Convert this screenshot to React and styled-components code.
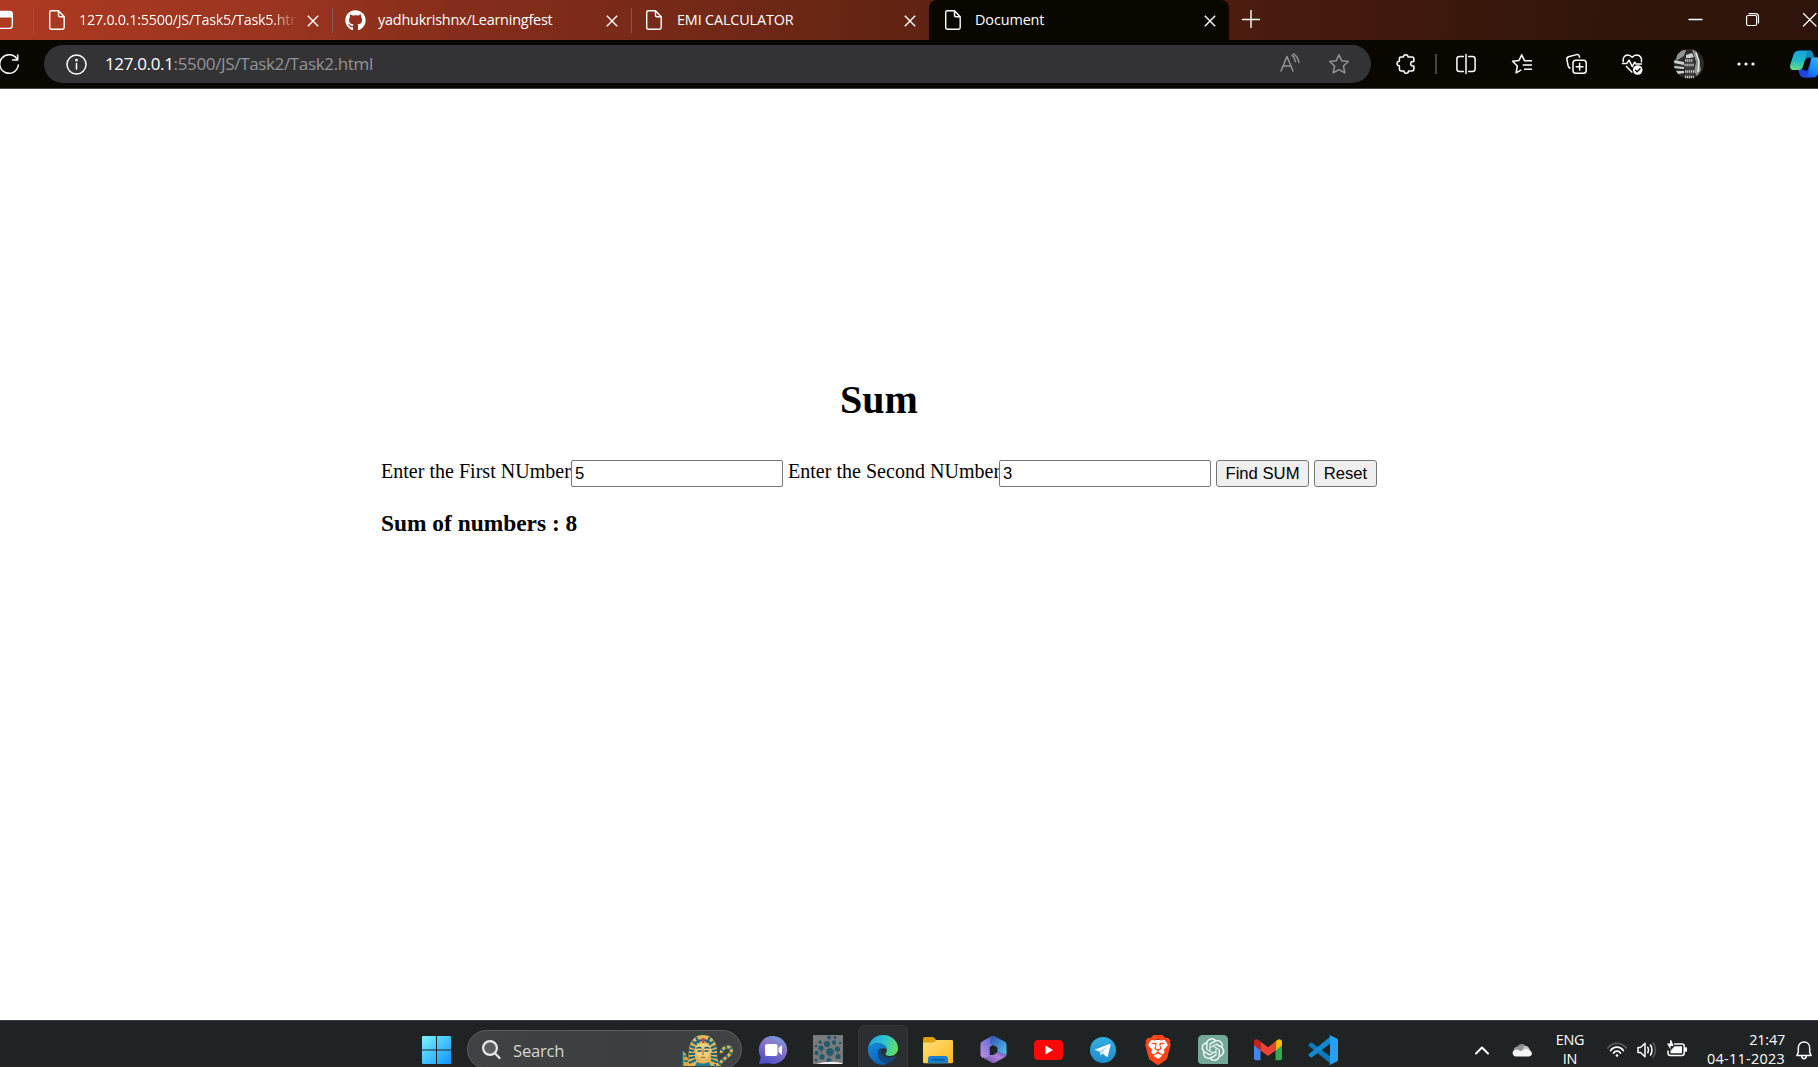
import React, { useState } from "react";
import styled, { createGlobalStyle, css } from "styled-components";
import { FaGithub } from "react-icons/fa";
import { SiBrave, SiOpenai } from "react-icons/si";

const GlobalStyle = createGlobalStyle`
  * { box-sizing: border-box; }
  html, body { margin: 0; padding: 0; background: #fff; }
  svg { display: block; flex: none; overflow: visible; }
`;

const ui = css`font-family: "Open Sans", "Noto Sans", sans-serif;`;

const Screen = styled.div`
  width: 1818px;
  height: 1067px;
  display: flex;
  flex-direction: column;
  overflow: hidden;
`;

/* ---------- browser tabs ---------- */
const TabStrip = styled.div`
  height: 40px;
  flex: none;
  display: flex;
  overflow: hidden;
  background: linear-gradient(92deg, #ae3a21 0, #983420 300px, #852d1a 460px, #742917 700px, #602313 925px, #4c1c0f 1235px, #41190c 1380px, #31150b 1600px, #2e140a 1818px);
`;
const TabAction = styled.div`
  width: 33px;
  flex: none;
  display: flex;
  align-items: center;
  justify-content: flex-start;
`;
const Tab = styled.div`
  width: ${(p) => p.$width}px;
  flex: none;
  height: 40px;
  padding: ${(p) => (p.$active ? "0 13px 6px 13px" : "0 13px 6px 12px")};
  display: flex;
  align-items: center;
  color: #fff;
  background: ${(p) => (p.$active ? "#0a0700" : "transparent")};
  border-radius: 8px 8px 0 0;
  &::before {
    content: "";
    display: ${(p) => (p.$active ? "none" : "block")};
    width: 1px;
    height: 25px;
    margin: 7px 0 0 -12px;
    background: #835c50;
  }
`;
const TabIcon = styled.div`
  width: 22px;
  height: 22px;
  margin: 6px 0 0 ${(p) => p.$left}px;
  display: flex;
  align-items: center;
  justify-content: center;
`;
const TabTitle = styled.div`
  ${ui}
  flex: 1;
  min-width: 0;
  margin: 6px 11px 0 ${(p) => p.$gap}px;
  height: 24px;
  line-height: 23px;
  font-size: 14.4px;
  letter-spacing: ${(p) => p.$track}px;
  white-space: nowrap;
  overflow: hidden;
  ${(p) => p.$fade && css`mask-image: linear-gradient(90deg, #000 88%, transparent 101%);`}
`;
const CloseButton = styled.div`
  width: 12px;
  margin-top: 7px;
`;
const NewTab = styled.div`
  padding: 10px 0 0 13px;
  flex: 1;
`;
const WindowControls = styled.div`
  display: flex;
  gap: 44px;
  padding-top: 13px;
  width: 129px;
  flex: none;
`;

/* ---------- toolbar ---------- */
const Toolbar = styled.div`
  height: 49px;
  flex: none;
  background: #0a0700;
  border-bottom: 1px solid #4b4641;
  display: flex;
  align-items: center;
  overflow: hidden;
`;
const Reload = styled.div`
  width: 44px;
  flex: none;
`;
const AddressBar = styled.div`
  width: 1327px;
  flex: none;
  height: 38px;
  border-radius: 19px;
  background: #333335;
  display: flex;
  align-items: center;
  padding: 0 22px;
`;
const Url = styled.div`
  ${ui}
  flex: 1;
  margin-left: 18px;
  font-size: 17px;
  line-height: 24px;
  letter-spacing: -0.35px;
  color: #949495;
  span { color: #fff; }
`;
const AddressIcons = styled.div`
  display: flex;
  gap: 29px;
`;
const ToolbarIcons = styled.div`
  display: flex;
  flex: none;
  align-items: center;
  margin-left: 6px;
`;
const ToolSlot = styled.div`
  width: ${(p) => p.$width || 55}px;
  flex: none;
  display: flex;
  justify-content: center;
  align-items: center;
`;
const ToolDivider = styled.div`
  width: 2px;
  height: 20px;
  background: #48453f;
`;

/* ---------- web page ---------- */
const Page = styled.main`
  flex: 1;
  background: #fff;
  padding: 288px 0 0 381px;
  font-family: "Liberation Serif", "Times New Roman", serif;
  color: #000;
`;
const Content = styled.div`
  width: 996px;
`;
const Title = styled.h1`
  margin: 0;
  text-align: center;
  font-size: 40px;
  line-height: 46px;
`;
const Form = styled.div`
  margin-top: 37px;
  height: 27px;
  display: flex;
  align-items: center;
  font-size: 20px;
`;
const Label = styled.label`
  width: ${(p) => p.$width}px;
  flex: none;
  line-height: 23px;
  margin-top: -4px;
  letter-spacing: 0.02px;
  white-space: nowrap;
`;
const NumberInput = styled.input`
  width: 212px;
  flex: none;
  height: 27px;
  margin: 0 5px 0 0;
  padding: 1px 3px 1px 3px;
  border: 1px solid #767676;
  border-radius: 2px;
  outline: 0;
  background: #fff;
  color: #000;
  font: 16.67px "Liberation Sans", Arial, sans-serif;
`;
const Button = styled.button`
  width: ${(p) => p.$width}px;
  height: 27px;
  margin: 0 5px 0 0;
  padding: 0;
  white-space: nowrap;
  flex: none;
  border: 1px solid #767676;
  border-radius: 3px;
  background: #efefef;
  color: #000;
  font: 16.67px "Liberation Sans", Arial, sans-serif;
`;
const Result = styled.h3`
  margin: 23px 0 0;
  font-size: 23.4px;
  line-height: 27px;
`;

/* ---------- taskbar ---------- */
const Taskbar = styled.footer`
  height: 47px;
  flex: none;
  background: #1f2324;
  border-top: 1px solid #3a3e3f;
  display: flex;
  align-items: flex-start;
  overflow: hidden;
`;
const StartButton = styled.div`
  padding: 15px 16px 0 422px;
`;
const SearchBox = styled.div`
  ${ui}
  width: 275px;
  height: 39px;
  margin-top: 9px;
  border: 1px solid #5d6061;
  border-radius: 20px;
  background: linear-gradient(90deg, #404344, #3b3f40 60%, #404344);
  display: flex;
  align-items: center;
  padding: 0 8px 0 14px;
  color: #d4d5d5;
  font-size: 16.6px;
  letter-spacing: -0.2px;
`;
const SearchText = styled.span`
  flex: 1;
  margin: 2px 0 0 12px;
`;
const Apps = styled.div`
  display: flex;
  gap: 5px;
  padding: 4px 0 0 6px;
`;
const AppButton = styled.div`
  width: 50px;
  height: 44px;
  padding-top: 9px;
  display: flex;
  justify-content: center;
  border: 1px solid ${(p) => (p.$active ? "#36393b" : "transparent")};
  border-bottom: 0;
  border-radius: 6px 6px 0 0;
  background: ${(p) => (p.$active ? "#2c2f31" : "transparent")};
`;
const Tray = styled.div`
  ${ui}
  height: 46px;
  display: flex;
  flex: 1;
  padding-left: 127px;
  color: #fff;
  font-size: 14.4px;
  line-height: 19px;
`;
const TrayItem = styled.div`
  width: ${(p) => p.$width}px;
  flex: none;
  padding-top: ${(p) => p.$top}px;
  padding-left: ${(p) => p.$left || 0}px;
  display: flex;
  justify-content: flex-start;
`;
const TrayText = styled.div`
  width: ${(p) => p.$width}px;
  height: 44px;
  overflow: hidden;
  flex: none;
  padding-top: 9px;
  white-space: nowrap;
  text-align: ${(p) => p.$align};
  letter-spacing: ${(p) => p.$track}px;
`;
const TrayDate = styled.div`
  letter-spacing: 0.3px;
`;

const line = { fill: "none", stroke: "#fff", strokeWidth: 1.4, strokeLinecap: "round", strokeLinejoin: "round" };

const FileIcon = () => (
  <svg width="16" height="20" viewBox="0 0 16 20" {...line}>
    <path d="M2.2.8h7.3l5.7 5.9v10.8c0 1-.7 1.7-1.7 1.7H2.4c-1 0-1.7-.7-1.7-1.7V2.4C.7 1.500 1.300.8 2.200.8zM9.500.8v4.400c0 .9.600 1.500 1.500 1.500h4.200" />
  </svg>
);
const XIcon = ({ size = 12 }) => (
  <svg width={size} height={size} viewBox="0 0 12 12" {...line} strokeLinecap="butt">
    <path d="M.8.8l10.400 10.400M11.200.8L.8 11.200" />
  </svg>
);

const CollectionsTabIcon = () => (
  <svg width="14" height="20" viewBox="0 0 14 20" {...line}>
    <path d="M-6 1.800H9.500c1.700 0 2.800 1.100 2.800 2.800v11c0 1.700-1.100 2.800-2.800 2.800H-6" />
    <path d="M-6 1.500H9.500c1.700 0 2.800 1.100 2.800 2.800v2.500H-6z" fill="#fff" />
  </svg>
);
const ReloadIcon = () => (
  <svg width="20" height="20" viewBox="0 0 20 20" {...line} strokeWidth="1.500">
    <path d="M17.200 5.500A9.300 9.300 0 1 0 18.300 11M17.700 1v5h-5.200" />
  </svg>
);
const InfoIcon = () => (
  <svg width="21" height="21" viewBox="0 0 21 21" {...line} strokeWidth="1.500">
    <circle cx="10.500" cy="10.500" r="9.500" />
    <path d="M10.500 9.500v5.500" />
    <circle cx="10.500" cy="6.200" r=".6" fill="#fff" />
  </svg>
);
const ReadAloudIcon = () => (
  <svg width="20" height="20" viewBox="0 0 20 20" {...line} stroke="#949495" strokeWidth="1.500">
    <path d="M1 17L7 2.500 13 17M3.200 12h7.600M12 1.200c1.800 1.500 3 3.500 3.400 6.300M13.500-.2c3 2 4.900 5 5.400 8.700" />
  </svg>
);
const StarIcon = () => (
  <svg width="20" height="20" viewBox="0 0 20 20" {...line} stroke="#949495" strokeWidth="1.500">
    <path d="M10 .8l2.700 6 6.600.7-4.900 4.500 1.400 6.800L10 15.600l-5.800 3.200L5.600 12 .7 7.500l6.600-.7z" />
  </svg>
);
const PuzzleIcon = () => (
  <svg width="20" height="20" viewBox="0 0 20 20" {...line} strokeWidth="1.500">
    <path d="M4.800 3h2.700c0-3 4.500-3 4.500 0h4c1.200 0 1.900.7 1.900 1.900V7.500h-1c-3 0-3 4.500 0 4.500h1v3c0 1.200-.7 1.900-1.900 1.900h-3.500c0 3-4.500 3-4.500 0H5.300c-1.200 0-1.900-.7-1.900-1.900v-3.200c-3.200 0-3.200-4.500 0-4.500V4.500C3.400 3.600 3.900 3 4.800 3z" />
  </svg>
);
const SplitIcon = () => (
  <svg width="20" height="20" viewBox="0 0 20 20" {...line} strokeWidth="1.500">
    <path d="M10 .5v19M7.300 2.500H3.500C1.900 2.500.9 3.500.9 5v10c0 1.500 1 2.500 2.600 2.500h3.800M12.700 2.500h3.800c1.600 0 2.600 1 2.600 2.500v10c0 1.500-1 2.500-2.600 2.500h-3.800" />
  </svg>
);
const FavoritesIcon = () => (
  <svg width="20" height="20" viewBox="0 0 20 20" {...line} strokeWidth="1.500">
    <path d="M12.600 6.800L9.700.8 7 6.400l-6.400.9L5.300 12l-1.200 6.800 4.700-2.600M13 6.800h6.500M11.200 11h8.300M12.500 15.200h7" />
  </svg>
);
const CollectionsIcon = () => (
  <svg width="21" height="20" viewBox="0 0 21 20" {...line} strokeWidth="1.500">
    <rect x="7" y="6.200" width="13.200" height="13" rx="2.800" />
    <path d="M13.600 9.300v6.800M10.200 12.700H17M4 14.200C3 13.800 2.500 13 2.200 12L.9 5.600C.6 4.200 1.300 3.200 2.600 2.800l8-2.200c1.200-.3 2.200.3 2.600 1.500l.4 1" />
  </svg>
);
const HeartIcon = () => (
  <svg width="21" height="21" viewBox="0 0 21 21" {...line} strokeWidth="1.500">
    <path d="M1.300 7.500C.4 3.800 2.800 1 5.700 1c2 0 3.200.8 4.500 2.300C11.500 1.800 12.700 1 14.700 1c3.300 0 5.600 3 4.700 6.700M.5 9.500h4.300l2.200-3.300 3.300 6.500 2.400-4.500 1.300 1.800h5.500M4.500 12.500l5.300 5.600" />
    <circle cx="15.700" cy="16" r="4.800" fill="#fff" stroke="none" />
    <path d="M13.500 16.200l1.600 1.500 2.900-3" stroke="#111" />
  </svg>
);
const Avatar = () => (
  <svg width="30" height="30" viewBox="0 0 30 30">
    <defs><clipPath id="face"><circle cx="15" cy="15" r="15" /></clipPath></defs>
    <g clipPath="url(#face)">
      <rect width="30" height="30" fill="#292929" />
      <path d="M4 1l8 0-2 6-8 5zM18 0l5 3 4 18-4 6-3-4 2-10z" fill="#929292" />
      <path d="M0 11l10 2v3L0 14zM0 17l10 1v2L0 19zM2 22l8 0v2l-6 1zM12 6l6-2 2 4-8 2z" fill="#cecece" />
      <path d="M11 9h9v18h-9z" fill="#3b3b3b" />
      <path d="M11 11.500h8M10.500 16h10M11 22.500h9M11 28h9" stroke="#c4c4c4" strokeWidth="2.500" strokeDasharray="1.300 .7" />
      <path d="M22 4l3 8-1 11" stroke="#e8e8e8" strokeWidth="1.500" fill="none" />
    </g>
  </svg>
);
const DotsIcon = () => (
  <svg width="18" height="4" viewBox="0 0 18 4" fill="#fff">
    <circle cx="2" cy="2" r="1.600" /><circle cx="9" cy="2" r="1.600" /><circle cx="16" cy="2" r="1.600" />
  </svg>
);
const CopilotIcon = () => (
  <svg width="32" height="28" viewBox="0 0 32 28">
    <defs>
      <linearGradient id="cpA" x1="0.300" y1="0" x2="0.100" y2="1"><stop stopColor="#18a4dc" /><stop offset=".5" stopColor="#20b9c4" /><stop offset="1" stopColor="#6adf80" /></linearGradient>
      <linearGradient id="cpB" x1="0.800" y1="0" x2="0.200" y2="1"><stop stopColor="#31b4ff" /><stop offset=".6" stopColor="#148bf5" /><stop offset="1" stopColor="#1b50e8" /></linearGradient>
    </defs>
    <path d="M8 19.500h7l6-12h9l-6.500 17c-.7 2-2 3-4 3h-6C9.800 27.500 9 22 8 19.500z" fill="#2044da" />
    <path d="M10 .5h9.500c2.600 0 3.200 1.500 4.500 7h-5.500c-2.500 0-3.200 1.500-4 4l-1.500 5c-.8 2.500-2 3.500-4.500 3.500H3.500C.3 20-.4 17.500.4 14.500L3.500 4.500C4.500 1.500 6.500.5 10 .5z" fill="url(#cpA)" />
    <path d="M17.500.5h2c2.600 0 3.200 1.500 4.500 7h-5.500L15 10z" fill="#087aae" opacity=".65" />
    <path d="M17.500 9.500l-3.500 11h3.500l3.500-11z" fill="#0a0700" />
    <path d="M22 7.500h7c3 0 3.500 2 2.500 5l-3 10c-1 3.500-3 5-6 5h-8c2.800-.5 3.200-3 4-6l2-8c.7-3 .5-5 1.500-6z" fill="url(#cpB)" />
  </svg>
);

const WindowsIcon = () => (
  <svg width="29" height="28" viewBox="0 0 29 28">
    <defs><linearGradient id="win" x2="1" y2="1"><stop stopColor="#7af3ff" /><stop offset="1" stopColor="#0b94fb" /></linearGradient></defs>
    <path d="M0 1q0-1 1-1h13v13.500H0zM15 0h13q1 0 1 1v12.500H15zM0 14.500h14V28H1q-1 0-1-1zM15 14.500h14V27q0 1-1 1H15z" fill="url(#win)" />
  </svg>
);
const SearchIcon = () => (
  <svg width="19" height="20" viewBox="0 0 19 20" fill="#5b5e60" stroke="#e6e7e7" strokeWidth="2.200" strokeLinecap="round">
    <circle cx="8" cy="8" r="6.900" /><path d="M13.200 13.500l4.300 4.600" fill="none" />
  </svg>
);
const PharaohIcon = () => (
  <svg width="52" height="32" viewBox="0 0 52 32">
    <path d="M2 32V17l3 3 5 12z" fill="#d8a649" /><path d="M1.500 32V17M3 22l3 0M3 27l5 0" stroke="#1d6678" strokeWidth="1.500" />
    <path d="M7 32c1-5 0-9 1-16C9 5 15 1 22 1s13 4 14 15c0 7 0 11 4 16z" fill="#e3b456" />
    <g stroke="#186783" strokeWidth="2" fill="none">
      <path d="M9 12l5 2M8 16l5 1M8 20l6 0M8 24l6-1M8 29l7-3M35 12l-5 2M36 16l-5 1M36 20l-6 0M37 24l-7-1M38 29l-8-3M11 7l5 4M33 7l-5 4M15 3l3 6M29 3l-3 6M14 9q8-6 16 0" />
    </g>
    <path d="M15 14c0-4 3-4.500 7-4.500s7 .5 7 4.500c0 7-3 12-7 12s-7-5-7-12z" fill="#f0ce80" />
    <path d="M15.500 14.500q3-2 5 0M23.500 14.500q2-2 5 0M16.500 17h4M23.500 17h4" stroke="#17596d" strokeWidth="1.400" fill="none" />
    <path d="M22 15v6M19.500 23.500h5" stroke="#b07830" strokeWidth="1.300" /><path d="M21 4h2.500v5H21z" fill="#c84931" />
    <path d="M14 32l2-4q6 3 12 0l2 4z" fill="#1e7c93" />
    <path d="M33 32c7-2 9-7 14-10 5-4 4-9 0-9s-6 2-7 6" stroke="#e4b557" strokeWidth="3" fill="none" />
    <path d="M33 32c7-2 9-7 14-10 5-4 4-9 0-9s-6 2-7 6" stroke="#1d7188" strokeWidth="3" strokeDasharray="2.200 2.800" fill="none" />
  </svg>
);
const ChatIcon = () => (
  <svg width="29" height="29" viewBox="0 0 29 29">
    <defs><linearGradient id="chat" x1=".8" y1="0" x2=".3" y2="1"><stop stopColor="#68a4dc" /><stop offset=".35" stopColor="#8d78cb" /><stop offset="1" stopColor="#4c4ec8" /></linearGradient></defs>
    <path d="M14.500 1a14 14 0 1 1-5 27.200L.8 29c-.6 0-.8-.5-.6-1l1.600-5.800A14 14 0 0 1 14.500 1z" fill="url(#chat)" />
    <rect x="6" y="9" width="12.500" height="12" rx="2" fill="#fff" /><path d="M19.500 13l3.500-3v10l-3.500-3z" fill="#fff" />
  </svg>
);
const nodes = [[14,9,3],[21,7.500,2.200],[8,13,2.600],[17,17,3.700],[24.500,14,2.600],[3.500,18,2.200],[9,22,2.700],[25,21.500,2.600],[16,25.500,2.600],[7,7,1.700],[16,2.500,2],[27,8,1.300],[3,11,1.300],[3,25,1.500],[22,2.500,1.500]];
const NetworkIcon = () => (
  <svg width="30" height="29" viewBox="0 0 30 29">
    <rect width="30" height="29" fill="#7b7b7b" />
    <path d="M8 13l9 4 7.500-3M17 17l-1 8M14 9l3 8M21 7.500l3.500 6.500M9 22l-1-9M25 21.500l-.5-7.500M7 7l7 2" stroke="#4a6873" strokeWidth=".8" fill="none" />
    {nodes.map(([x, y, r], i) => <circle key={i} cx={x} cy={y} r={r} fill="#235a70" />)}
    <path d="M3 29q12-4 26-1v1z" fill="#eee" />
  </svg>
);
const EdgeIcon = () => (
  <svg width="30" height="30" viewBox="0 0 30 30">
    <defs>
      <linearGradient id="eTop" x1="0" y1=".4" x2="1" y2=".6"><stop stopColor="#259fdf" /><stop offset=".5" stopColor="#2cc4d3" /><stop offset="1" stopColor="#65df58" /></linearGradient>
      <linearGradient id="eMid" x2=".4" y2="1"><stop stopColor="#168bd8" /><stop offset="1" stopColor="#0a63bb" /></linearGradient>
    </defs>
    <path d="M0 14C.7 6 7 0 15 0c9 0 15 6.500 15 13.300 0 4.700-3.600 7.700-7.800 7.700-3.700 0-4.700-1.500-4.700-2.300 0-.7 1.300-1.300 1.300-3.700 0-3.500-3.800-6.800-8.800-6.800C5 8.200 1.500 10.700 0 14z" fill="url(#eTop)" />
    <path d="M0 14c1.500-3.300 5-5.800 10-5.800 4.600 0 8.200 2.700 8.700 5.800-5-2.500-9 2-8.500 6 .5 5 5 8 9.300 8.500-1.500.8-3.500 1.300-5 1.300C6.500 29.500 0 22.500 0 15z" fill="url(#eMid)" />
    <path d="M13 13c-2.500 1-3.500 3.500-3.200 6 .5 5.300 5 9 9.700 9.400 3.500-1.200 6.500-3.500 8.200-6.500.4-.6-.2-1-.8-.7-7 3.500-14.500-.5-14-6.200z" fill="#13477d" />
  </svg>
);
const ExplorerIcon = () => (
  <svg width="30" height="29" viewBox="0 0 30 29">
    <defs><linearGradient id="fold" x2="1" y2="1"><stop stopColor="#ffdf78" /><stop offset="1" stopColor="#fcb91d" /></linearGradient></defs>
    <path d="M0 4q0-2 2-2h7.500q1 0 1.700.8l2 2.200H28q2 0 2 2v8H0z" fill="#dfa00f" />
    <path d="M0 7.500h10.500l3-2.500H28.500q1.500 0 1.500 1.500V27q0 1.200-1.500 1.200h-27Q0 28.200 0 27z" fill="url(#fold)" />
    <path d="M5 28.200v-4.500q0-2.700 2.700-2.700h14.600q2.700 0 2.700 2.700v4.500z" fill="#1780d0" /><path d="M9 24.800h12.500" stroke="#0a4f8e" strokeWidth="1.200" />
  </svg>
);
const OfficeIcon = () => (
  <svg width="27" height="29" viewBox="0 0 27 29">
    <defs>
      <linearGradient id="o1" x1="1" y1="0" x2="0" y2="1"><stop stopColor="#4a62cb" /><stop offset="1" stopColor="#c293e8" /></linearGradient>
      <linearGradient id="o2" x2="1" y2="1"><stop stopColor="#2d52ac" /><stop offset="1" stopColor="#55c5f3" /></linearGradient>
      <linearGradient id="o3" x1="0" y1="1" x2="1" y2="0"><stop stopColor="#6847b0" /><stop offset=".6" stopColor="#ad84d9" /><stop offset="1" stopColor="#6654b9" /></linearGradient>
    </defs>
    <path d="M11 1.500L2 6.500Q.5 7.500.5 9.500v10q0 2 1.700 3l3 .5q4.500 0 4.500-3v-8l5-3V1z" fill="url(#o1)" />
    <path d="M11 1.500q2-1 4 0l9.500 5q2 1 2 3V20l-9-3v-4.500L10 8.500z" fill="url(#o2)" />
    <path d="M3 22.700q4.500 1 6.500-2.700l4 0 4-3 9 2.500q0 1.500-1.500 2.500l-9.500 5.500q-2 1-4 0z" fill="url(#o3)" />
  </svg>
);
const YouTubeIcon = () => (
  <svg width="29" height="29" viewBox="0 0 29 29"><rect y="5" width="29" height="20" rx="4" fill="#fb0808" /><path d="M11.500 10.500v9l7.500-4.500z" fill="#fff" /></svg>
);
const TelegramIcon = () => (
  <svg width="26" height="29" viewBox="0 0 26 29"><defs><linearGradient id="tg" y2="1" x2="0"><stop stopColor="#35aee2" /><stop offset="1" stopColor="#1e8ecb" /></linearGradient></defs>
    <circle cx="13" cy="15" r="13" fill="url(#tg)" /><path d="M4.500 14.700L19.500 9c.8-.2 1.200.2 1 1l-2.600 11c-.2.900-.8 1-1.500.6l-4-3-2 2-.7-4.200z" fill="#fff" /><path d="M9.700 16.300l8-5-6 6.300-1.300 3z" fill="#a9cfe5" /></svg>
);
const BraveMark = () => (
  <svg width="26" height="29" viewBox="0 0 26 29">
    <path d="M5 5h16l2 5-4 13-6 4-6-4L3 10z" fill="#fff" />
    <SiBrave x="-2" y="0" size={30} color="#fa4618" />
  </svg>
);
const GptMark = () => (
  <svg width="30" height="29" viewBox="0 0 30 29">
    <path d="M5 0h20q5 0 5 5v24H4q-4 0-4-4V5q0-5 5-5z" fill="#75a899" /><SiOpenai x="3.500" y="3" size={23} color="#eef6f3" />
  </svg>
);
const GmailIcon = () => (
  <svg width="28" height="29" viewBox="0 0 28 29">
    <path d="M0 9l6.500 5v11.300H2q-2 0-2-2z" fill="#4285f4" /><path d="M21.500 14L28 9v14.300q0 2-2 2h-4.500z" fill="#34a853" />
    <path d="M21.500 6.500L23.300 5C25.400 3.400 28 4.500 28 7v3.500L21.500 15.500z" fill="#fbbc04" /><path d="M0 7C0 4.500 2.600 3.400 4.700 5l1.800 1.500v9L0 10.500z" fill="#c5221f" /><path d="M6.500 6.500l7.500 5.800 7.500-5.800v9L14 21l-7.500-5.500z" fill="#ea4335" />
  </svg>
);
const CodeIcon = () => (
  <svg width="30" height="30" viewBox="0 0 30 30">
    <path d="M1 9.200l1.500-1.400q.8-.6 1.600 0L23 22v7L.9 11q-.8-.9.100-1.800z" fill="#0b79bf" /><path d="M1 20.800l1.500 1.400q.8.600 1.600 0L23 8V1L.9 19q-.8.9.100 1.800z" fill="#1189d0" />
    <path d="M22 .3L29 3.500q1 .5 1 1.600v19.800q0 1.100-1 1.600l-7 3.200q-1 .3-1.700-.4 1.700 1 1.700-1.500V2.200Q22 0 20.300.7q.7-.7 1.700-.4z" fill="#29a0ef" />
  </svg>
);

const ChevronIcon = () => (
  <svg width="14" height="9" viewBox="0 0 14 9" {...line} strokeWidth="2"><path d="M1 7.500l6-6 6 6" /></svg>
);
const CloudIcon = () => (
  <svg width="20" height="14" viewBox="0 0 20 14">
    <path d="M2 9C1 6 3 3.500 5.500 3.500 7 .5 12 0 14 3.500l2 3z" fill="#8f9192" /><path d="M11 5q4-5 7 2l1 2-7 1z" fill="#c4c5c6" />
    <path d="M4 13.500C.5 13.500-.5 9 2 7.500q3-2 6 .5l5-2q3-.5 4.500 1.500C20.500 8 21 13 17 13.500z" fill="#f5f5f5" />
  </svg>
);
const WifiIcon = () => (
  <svg width="20" height="16" viewBox="0 0 20 16" {...line} strokeWidth="1.700">
    <path d="M.8 6C5.500-.2 14.500-.2 19.200 6" stroke="#56595a" /><path d="M3.700 8.500c3-4.500 9.600-4.500 12.600 0M6.500 11c1.700-2.400 5.300-2.400 7 0" /><circle cx="10" cy="13.500" r="1.300" fill="#fff" stroke="none" />
  </svg>
);
const SpeakerIcon = () => (
  <svg width="20" height="16" viewBox="0 0 20 16" {...line} strokeWidth="1.500">
    <path d="M1 5.500h2.500L8 1.200v13.600l-4.500-4.300H1zM10.800 5.200q1.500 2.800 0 5.600M13.500 3q3 5 0 10" /><path d="M16.200 1q4.500 7 0 14" stroke="#56595a" />
  </svg>
);
const BatteryIcon = () => (
  <svg width="20" height="17" viewBox="0 0 20 17" {...line} strokeWidth="1.500">
    <path d="M7.500 4H15q2.200 0 2.200 2v7q0 2.500-2.200 2.500H3.500Q1 15.500 1 13v-2" /><path d="M7.500 6.200H15v7H3.500v-2.500z" fill="#fff" stroke="none" /><path d="M18.300 8v3h1V8z" fill="#fff" />
    <path d="M3 0v3.500H0l3.500 6V6h3L4.500.5z" fill="#fff" stroke="none" />
  </svg>
);
const BellIcon = () => (
  <svg width="16" height="19" viewBox="0 0 16 19" {...line} strokeWidth="1.500">
    <path d="M8 1C4.500 1 2.300 3.600 2.300 6.800v4.400L.9 14.500h14.200l-1.400-3.300V6.800C13.700 3.600 11.500 1 8 1zM5.700 15c.2 3.500 4.400 3.500 4.600 0" />
  </svg>
);

const tabs = [
  { title: "127.0.0.1:5500/JS/Task5/Task5.html", width: 299, track: -0.27, left: 12, gap: 11, fade: true },
  { title: "yadhukrishnx/Learningfest", width: 299, track: -0.2, left: 11, gap: 12, github: true },
  { title: "EMI CALCULATOR", width: 298, track: -0.15, left: 11, gap: 12 },
  { title: "Document", width: 300, track: -0.1, left: 0, gap: 11, active: true },
];
const apps = [ChatIcon, NetworkIcon, EdgeIcon, ExplorerIcon, OfficeIcon, YouTubeIcon, TelegramIcon, BraveMark, GptMark, GmailIcon, CodeIcon];

export default function App() {
  const [first, setFirst] = useState("5");
  const [second, setSecond] = useState("3");
  const [sum, setSum] = useState("8");
  const reset = () => { setFirst(""); setSecond(""); setSum(""); };

  return (
    <Screen>
      <GlobalStyle />
      <TabStrip>
        <TabAction><CollectionsTabIcon /></TabAction>
        {tabs.map((t) => (
          <Tab key={t.title} $width={t.width} $active={t.active}>
            <TabIcon $left={t.left}>{t.github ? <FaGithub size={21} /> : <FileIcon />}</TabIcon>
            <TabTitle $track={t.track} $fade={t.fade} $gap={t.gap}>{t.title}</TabTitle>
            <CloseButton><XIcon /></CloseButton>
          </Tab>
        ))}
        <NewTab>
          <svg width="18" height="18" viewBox="0 0 18 18" {...line}><path d="M9 .5v17M.5 9.500h17" /></svg>
        </NewTab>
        <WindowControls>
          <svg width="13" height="13" viewBox="0 0 13 13" {...line}><path d="M0 6.500h13" /></svg>
          <svg width="13" height="13" viewBox="0 0 13 13" {...line} strokeWidth="1.200"><rect x=".6" y="2.500" width="10" height="10" rx="1.500" /><path d="M3 .6h6.500q3 0 3 3V10" /></svg>
          <svg width="13" height="13" viewBox="0 0 13 13" {...line} strokeWidth="1.200"><path d="M.5.500l12.500 12.500M13 .500L.5 13" /></svg>
        </WindowControls>
      </TabStrip>

      <Toolbar>
        <Reload><ReloadIcon /></Reload>
        <AddressBar>
          <InfoIcon />
          <Url><span>127.0.0.1</span>:5500/JS/Task2/Task2.html</Url>
          <AddressIcons><ReadAloudIcon /><StarIcon /></AddressIcons>
        </AddressBar>
        <ToolbarIcons>
          <ToolSlot $width={57}><PuzzleIcon /></ToolSlot>
          <ToolSlot $width={4}><ToolDivider /></ToolSlot>
          <ToolSlot $width={56}><SplitIcon /></ToolSlot>
          <ToolSlot><FavoritesIcon /></ToolSlot>
          <ToolSlot><CollectionsIcon /></ToolSlot>
          <ToolSlot $width={56}><HeartIcon /></ToolSlot>
          <ToolSlot $width={58}><Avatar /></ToolSlot>
          <ToolSlot $width={56}><DotsIcon /></ToolSlot>
          <ToolSlot $width={64}><CopilotIcon /></ToolSlot>
        </ToolbarIcons>
      </Toolbar>

      <Page>
        <Content>
          <Title>Sum</Title>
          <Form>
            <Label $width={190}>Enter the First NUmber</Label>
            <NumberInput value={first} onChange={(e) => setFirst(e.target.value)} />
            <Label $width={211}>Enter the Second NUmber</Label>
            <NumberInput value={second} onChange={(e) => setSecond(e.target.value)} />
            <Button $width={93} onClick={() => setSum(String(Number(first) + Number(second)))}>Find SUM</Button>
            <Button $width={63} onClick={reset}>Reset</Button>
          </Form>
          <Result>Sum of numbers : {sum}</Result>
        </Content>
      </Page>

      <Taskbar>
        <StartButton><WindowsIcon /></StartButton>
        <SearchBox>
          <SearchIcon />
          <SearchText>Search</SearchText>
          <PharaohIcon />
        </SearchBox>
        <Apps>
          {apps.map((Icon, i) => <AppButton key={i} $active={Icon === EdgeIcon}><Icon /></AppButton>)}
        </Apps>
        <Tray>
          <TrayItem $width={37} $top={25}><ChevronIcon /></TrayItem>
          <TrayItem $width={38} $top={22}><CloudIcon /></TrayItem>
          <TrayText $width={40} $align="center" $track={-0.2}>ENG<br />IN</TrayText>
          <TrayItem $width={17} $top={0} />
          <TrayItem $width={30} $top={21}><WifiIcon /></TrayItem>
          <TrayItem $width={30} $top={21}><SpeakerIcon /></TrayItem>
          <TrayItem $width={35} $top={19}><BatteryIcon /></TrayItem>
          <TrayText $width={83} $align="right" $track={-0.2}>21:47<TrayDate>04-11-2023</TrayDate></TrayText>
          <TrayItem $width={29} $top={20} $left={11}><BellIcon /></TrayItem>
        </Tray>
      </Taskbar>
    </Screen>
  );
}
